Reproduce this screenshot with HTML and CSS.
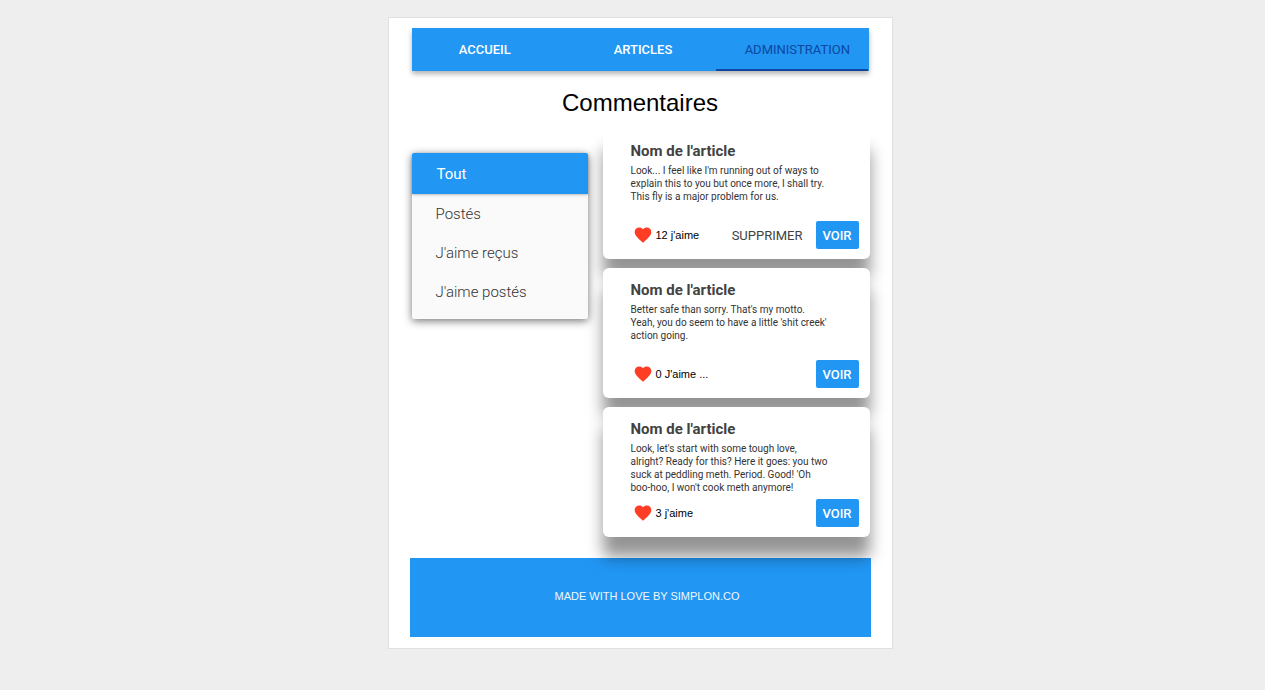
FILE: index.html
```html
<!DOCTYPE html>
<html lang="fr">
<head>
<meta charset="utf-8">
<meta name="viewport" content="width=device-width, initial-scale=1">
<title>Commentaires</title>
<link rel="stylesheet" href="styles.css">
</head>
<body>
<svg class="sprite" aria-hidden="true">
  <symbol id="heart" viewBox="0 0 24 24">
    <path d="M12 21.35l-1.45-1.32C5.4 15.36 2 12.28 2 8.5 2 5.42 4.42 3 7.5 3c1.74 0 3.41.81 4.5 2.09C13.09 3.81 14.76 3 16.5 3 19.58 3 22 5.42 22 8.5c0 3.78-3.4 6.86-8.55 11.54L12 21.35z"/>
  </symbol>
</svg>
<div class="page">
  <nav class="tabs">
    <a class="tab tab-first" href="#">ACCUEIL</a>
    <a class="tab tab-middle" href="#">ARTICLES</a>
    <a class="tab tab-active" href="#" aria-current="page">ADMINISTRATION</a>
  </nav>
  <h1 class="title">Commentaires</h1>
  <main class="content">
    <nav class="menu">
      <a class="menu-head" href="#">Tout</a>
      <a class="menu-item" href="#">Postés</a>
      <a class="menu-item" href="#">J'aime reçus</a>
      <a class="menu-item" href="#">J'aime postés</a>
    </nav>
    <section class="cards">
      <article class="card">
        <h2 class="card-title">Nom de l'article</h2>
        <p class="card-text">Look... I feel like I'm running out of ways to<br>explain this to you but once more, I shall try.<br>This fly is a major problem for us.</p>
        <div class="card-row">
          <svg class="heart" aria-hidden="true"><use href="#heart"/></svg>
          <span class="likes">12 j'aime</span>
          <button class="btn-flat" type="button">SUPPRIMER</button>
          <button class="btn" type="button">VOIR</button>
        </div>
      </article>
      <article class="card">
        <h2 class="card-title">Nom de l'article</h2>
        <p class="card-text">Better safe than sorry. That's my motto.<br>Yeah, you do seem to have a little 'shit creek'<br>action going.</p>
        <div class="card-row">
          <svg class="heart" aria-hidden="true"><use href="#heart"/></svg>
          <span class="likes">0 J'aime ...</span>
          <button class="btn" type="button">VOIR</button>
        </div>
      </article>
      <article class="card">
        <h2 class="card-title">Nom de l'article</h2>
        <p class="card-text">Look, let's start with some tough love,<br>alright? Ready for this? Here it goes: you two<br>suck at peddling meth. Period. Good! 'Oh<br>boo-hoo, I won't cook meth anymore!</p>
        <div class="card-row">
          <svg class="heart" aria-hidden="true"><use href="#heart"/></svg>
          <span class="likes">3 j'aime</span>
          <button class="btn" type="button">VOIR</button>
        </div>
      </article>
    </section>
  </main>
  <footer class="footer">MADE WITH LOVE BY SIMPLON.CO</footer>
</div>
</body>
</html>
```
FILE: styles.css
```css
* {
  box-sizing: border-box;
}

body {
  margin: 0;
  padding: 17px 0 17px 15px;
  background: #eee;
  font-family: Roboto, "Liberation Sans", sans-serif;
}

a {
  color: inherit;
  text-decoration: none;
}

.sprite {
  display: none;
}

.page {
  max-width: 505px;
  margin: 0 auto;
  padding: 10px 21px 11px;
  background: #fff;
  border: 1px solid #e0e0e0;
}

.tabs {
  display: grid;
  grid-template-columns: repeat(3, 1fr);
  margin: 0 2px;
  background: #2196f3;
  color: #fff;
  font-size: 13px;
  font-weight: 500;
  line-height: 43px;
  text-align: center;
  box-shadow: 0 3px 5px rgba(0, 0, 0, 0.3);
}

.tab-first {
  padding-right: 6px;
}

.tab-middle {
  padding-left: 6px;
}

.tab-active {
  padding-left: 10px;
  color: #0d47a1;
  font-weight: 400;
  box-shadow: inset 0 -2px #0d47a1;
}

.title {
  margin: 18px 0 12px;
  font: 400 24px/28px "Liberation Sans", Arial, sans-serif;
  color: #000;
  text-align: center;
}

.content {
  display: grid;
  grid-template-columns: 176fr 267fr;
  gap: 15px;
  align-items: start;
  margin: 0 1px 0 2px;
}

.menu {
  display: flex;
  flex-direction: column;
  margin-top: 24px;
  padding-bottom: 7px;
  background: #fafafa;
  border-radius: 2px;
  box-shadow: 0 2px 9px rgba(0, 0, 0, 0.55);
  color: #333;
  font-size: 15px;
  font-weight: 300;
  line-height: 39px;
}

.menu-head {
  margin-bottom: 1px;
  padding: 2px 25px 0;
  background: #2196f3;
  border-radius: 2px 2px 0 0;
  box-shadow: 0 1px 3px rgba(0, 0, 0, 0.25);
  color: #fff;
  font-weight: 400;
}

.menu-item {
  padding: 0 24px;
}

.cards {
  display: flex;
  flex-direction: column;
  gap: 9px;
}

.card {
  position: relative;
  display: flex;
  flex-direction: column;
  min-height: 130px;
  padding: 13px 11px 10px 28px;
  background: #fff;
  border-radius: 6px;
  box-shadow: 0 20px 16px rgba(0, 0, 0, 0.42);
}

.card-title {
  margin: 0 0 4px;
  color: #424242;
  font-size: 15px;
  font-weight: 700;
  line-height: 18px;
}

.card-text {
  margin: 0;
  color: #333;
  font-size: 10px;
  line-height: 13px;
}

.card-row {
  display: flex;
  align-items: center;
  margin-top: auto;
  padding-left: 2px;
}

.heart {
  width: 20px;
  height: 20px;
  fill: #ff3d24;
}

.likes {
  margin: 0 auto 0 3px;
  color: #000;
  font: 11px/13px "Liberation Sans", Arial, sans-serif;
}

.btn,
.btn-flat {
  height: 28px;
  padding: 0;
  border: 0;
  font-family: inherit;
  font-size: 13px;
  cursor: pointer;
}

.btn {
  width: 43px;
  background: #2196f3;
  border-radius: 2px;
  color: #fff;
  font-weight: 500;
}

.btn-flat {
  margin-right: 13px;
  background: none;
  color: #424242;
}

.footer {
  margin-top: 21px;
  padding: 30px 0 33px 14px;
  background: #2196f3;
  color: #f1f8ff;
  font: 11px/16px "Liberation Sans", Arial, sans-serif;
  text-align: center;
}
```
